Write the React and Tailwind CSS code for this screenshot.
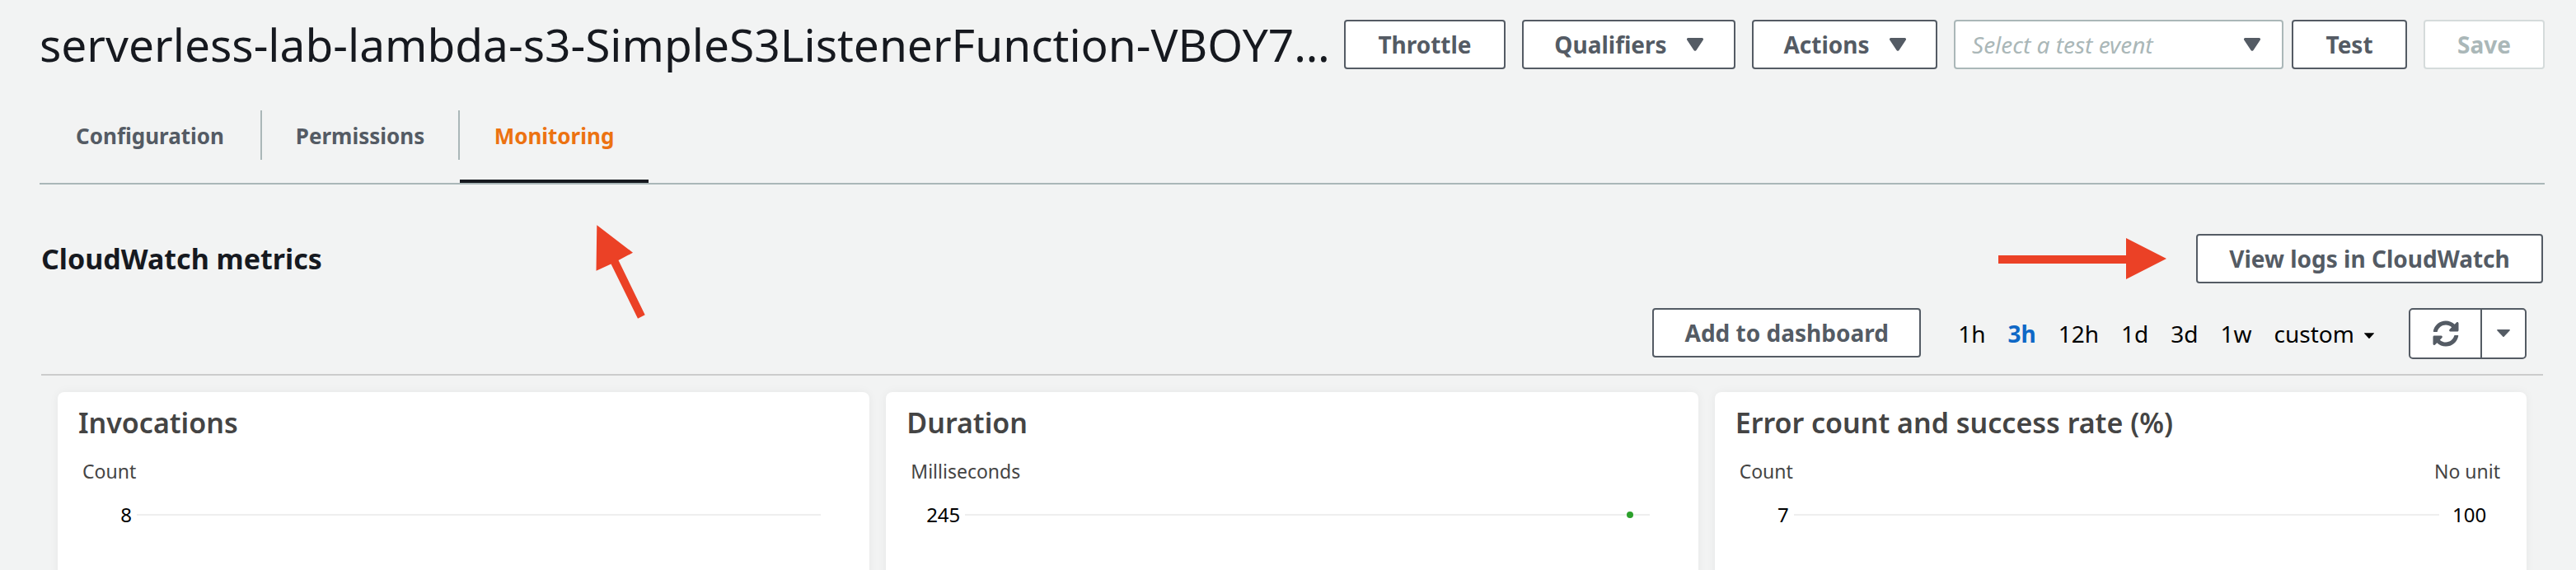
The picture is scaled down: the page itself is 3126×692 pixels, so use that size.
const BTN =
  "flex h-[60px] shrink-0 items-center justify-center rounded-[4px] border-2 border-[#545b64] bg-white text-[28px] leading-9 font-bold whitespace-nowrap text-[#545b64]";

function Triangle({ className }) {
  return (
    <svg viewBox="0 0 20 16" className={className} fill="currentColor" aria-hidden="true">
      <path d="M1.6 0h16.8a1.6 1.6 0 0 1 1.4 2.4l-8.3 12.7a1.8 1.8 0 0 1-3 0L.2 2.4A1.6 1.6 0 0 1 1.6 0z" />
    </svg>
  );
}

function Caret({ className }) {
  return (
    <svg viewBox="0 0 16 9" className={className} fill="currentColor" aria-hidden="true">
      <path d="M.8 0h14.4a.7.7 0 0 1 .5 1.2L8.6 8.7a.8.8 0 0 1-1.2 0L.3 1.2A.7.7 0 0 1 .8 0z" />
    </svg>
  );
}

function Tab({ label, active, divided, width }) {
  return (
    <li className={"flex " + width}>
      <a
        href="#"
        className={
          active
            ? "flex-1 border-b-4 border-[#16191f] pt-[13px] text-center text-[#ec7211]"
            : "flex-1 pt-[13px] text-center"
        }
      >
        {label}
      </a>
      {divided && <span className="h-[60px] w-0.5 bg-[#aab7b8]" />}
    </li>
  );
}

function MetricCard({ title, unit, max, rightUnit, rightMax, point }) {
  return (
    <section className="h-[500px] rounded-lg bg-white px-[25px] pt-[13px] shadow-[0_0_12px_rgba(0,0,0,0.05)]">
      <h3 className="text-[34px] leading-[48px] font-semibold text-[#444]">{title}</h3>
      <div className="flex justify-between pt-[19px] pr-[7px] pl-[5px] text-[23px] leading-8 text-[#444]">
        <span>{unit}</span>
        {rightUnit && <span>{rightUnit}</span>}
      </div>
      <div className="flex items-center pt-[21px] text-[24px] leading-8 text-black">
        <span className="w-[65px] text-right">{max}</span>
        <span className="relative ml-[6px] h-0.5 flex-1 bg-[#eee]">
          {point && <span className="absolute -top-[3px] right-[20px] size-2 rounded-full bg-[#2ca02c]" />}
        </span>
        <span className={rightMax ? "w-[81px] pl-[16px]" : "w-[34px]"}>{rightMax}</span>
      </div>
    </section>
  );
}

const RANGES = ["1h", "3h", "12h", "1d", "3d", "1w"];

export default function App() {
  return (
    <div className="relative h-screen overflow-hidden bg-[#f2f3f3] font-['Noto_Sans',sans-serif] text-[#16191f]">
      <header className="flex items-center pt-6 pr-[38px] pl-12">
        <h1 className="min-w-0 flex-1 text-[55px] leading-[60px] whitespace-nowrap">
          serverless-lab-lambda-s3-SimpleS3ListenerFunction-VBOY7…
        </h1>
        <div className="flex">
          <button className={BTN + " w-[196px]"}>Throttle</button>
          <button className={BTN + " ml-5 w-[259px] gap-6"}>
            Qualifiers <Triangle className="h-4 w-5" />
          </button>
          <button className={BTN + " ml-5 w-[225px] gap-6"}>
            Actions <Triangle className="h-4 w-5" />
          </button>
          <div className="relative ml-5 w-[400px]">
            <select
              aria-label="Test event"
              className="h-[60px] w-full appearance-none rounded-[4px] border-2 border-[#aab7b8] bg-white px-5 text-[28px] text-[#aab7b8] italic"
            >
              <option>Select a test event</option>
            </select>
            <Triangle className="pointer-events-none absolute top-[22px] right-[28px] h-4 w-5 text-[#545b64]" />
          </div>
          <button className={BTN + " ml-[10px] w-[140px]"}>Test</button>
          <button
            disabled
            className="ml-5 flex h-[60px] w-[147px] items-center justify-center rounded-[4px] border-2 border-[#d5dbdb] bg-white text-[28px] leading-9 font-bold text-[#aab7b8]"
          >
            Save
          </button>
        </div>
      </header>

      <nav className="mr-[38px] ml-12 border-b-2 border-[#aab7b8] pt-[50px]">
        <ul className="flex h-[88px] text-[26px] leading-9 font-bold text-[#545b64]">
          <Tab label="Configuration" divided width="w-[270px]" />
          <Tab label="Permissions" divided width="w-[240px]" />
          <Tab label="Monitoring" active width="w-[229px]" />
        </ul>
      </nav>

      <main className="mr-10 ml-[50px] pt-[60px]">
        <div className="flex items-center justify-between">
          <h2 className="text-[34px] leading-[60px] font-bold">CloudWatch metrics</h2>
          <div className="flex items-center gap-9">
            <svg viewBox="0 0 204 50" className="h-[50px] w-[204px] fill-[#eb4126]" aria-hidden="true">
              <path d="M0 21h155V0l49 25-49 25V31H0z" />
            </svg>
            <button className={BTN + " w-[421px]"}>View logs in CloudWatch</button>
          </div>
        </div>

        <div className="mt-[30px] flex items-start justify-end border-b-2 border-[#ccc] pr-5 pb-[18px]">
          <button className={BTN + " w-[326px]"}>Add to dashboard</button>
          <div className="ml-[45px] flex h-[62px] items-center gap-[27px] text-[28px] leading-9 text-black">
            {RANGES.map((r) => (
              <button key={r} className={r === "3h" ? "font-bold text-[#0f68c6]" : ""}>
                {r}
              </button>
            ))}
            <button className="flex items-center gap-3">
              custom <Caret className="mt-1 h-[7px] w-3" />
            </button>
          </div>
          <div className="ml-[42px] flex h-[62px] rounded-[5px] border-2 border-[#545b64] bg-white text-[#545b64]">
            <button aria-label="Refresh" className="flex w-[85px] items-center justify-center">
              <svg viewBox="0 0 512 512" className="size-8" fill="currentColor" aria-hidden="true">
                <path d="M370.7 133.3C339.5 104 298.9 88 255.8 88c-77.5.1-144.3 53.2-162.8 126.9-1.3 5.4-6.1 9.1-11.7 9.1H24.1c-7.5 0-13.2-6.8-11.8-14.2C33.9 94.9 134.8 8 256 8c66.4 0 126.8 26.1 171.3 68.7L463 41C478.1 25.9 504 36.6 504 57.9V192c0 13.3-10.7 24-24 24H345.9c-21.4 0-32.1-25.9-17-41l41.8-41.7zM32 296h134.1c21.4 0 32.1 25.9 17 41l-41.8 41.8c31.3 29.3 71.8 45.3 114.9 45.3 77.4-.1 144.3-53.1 162.8-126.8 1.3-5.4 6.1-9.1 11.7-9.1h57.3c7.5 0 13.2 6.8 11.8 14.2C478.1 417.1 377.2 504 256 504c-66.4 0-126.8-26.1-171.3-68.7L49 471C33.9 486.1 8 475.4 8 454.1V320c0-13.3 10.7-24 24-24z" />
              </svg>
            </button>
            <button aria-label="Refresh options" className="flex w-[54px] justify-center border-l-2 border-[#545b64] pt-6">
              <Caret className="h-[9px] w-4" />
            </button>
          </div>
        </div>

        <div className="grid grid-cols-3 gap-5 px-5 pt-5">
          <MetricCard title="Invocations" unit="Count" max="8" />
          <MetricCard title="Duration" unit="Milliseconds" max="245" point />
          <MetricCard title="Error count and success rate (%)" unit="Count" max="7" rightUnit="No unit" rightMax="100" />
        </div>
      </main>

      <svg viewBox="0 0 60 114" className="absolute top-[273px] left-[723px] h-[114px] w-[60px] fill-[#eb4126]" aria-hidden="true">
        <path d="M1.3.3L45 33.7 27.5 43 59.7 109.3 51 113.7 18.5 47.5.5 55.7z" />
      </svg>
    </div>
  );
}
